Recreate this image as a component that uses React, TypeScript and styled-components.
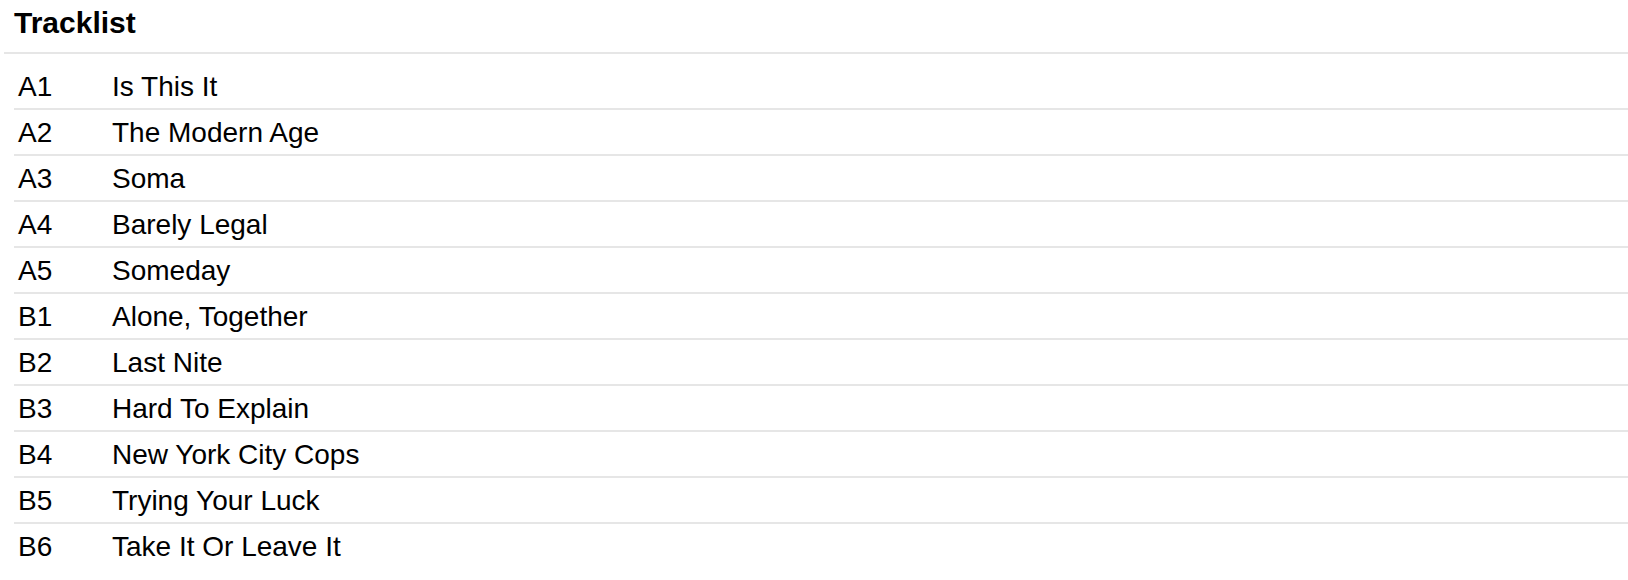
import React from 'react';
import styled, {createGlobalStyle} from "styled-components";

const tracks = [
    {position: "A1", title: "Is This It"},
    {position: "A2", title: "The Modern Age"},
    {position: "A3", title: "Soma"},
    {position: "A4", title: "Barely Legal"},
    {position: "A5", title: "Someday"},
    {position: "B1", title: "Alone, Together"},
    {position: "B2", title: "Last Nite"},
    {position: "B3", title: "Hard To Explain"},
    {position: "B4", title: "New York City Cops"},
    {position: "B5", title: "Trying Your Luck"},
    {position: "B6", title: "Take It Or Leave It"},
];

const App = () => {
    return (
        <>
            <GlobalStyle/>
            <StyledTracklist>
                <Header>
                    <Title>Tracklist</Title>
                </Header>
                <List>
                    {tracks.map(t => (
                        <Row key={t.position}>
                            <Position>{t.position}</Position>
                            <TrackTitle>{t.title}</TrackTitle>
                        </Row>
                    ))}
                </List>
            </StyledTracklist>
        </>
    );
};

export default App;

const GlobalStyle = createGlobalStyle`
  body {
    margin: 0;
    background: #fff;
    color: #000;
    font-family: "Liberation Sans", Arial, Helvetica, sans-serif;
  }
`

const StyledTracklist = styled.section`
  overflow: hidden;
`

const Header = styled.div`
  margin-left: 4px;
  padding: 7px 10px 13px;
  border-bottom: 2px solid #e6e6e6;
`

const Title = styled.h2`
  margin: 0;
  font-size: 30px;
  line-height: 32px;
  font-weight: 700;
`

const List = styled.ol`
  list-style: none;
  margin: 10px 0 0 14px;
  padding: 0;
`

const Row = styled.li`
  display: grid;
  grid-template-columns: 94px 1fr;
  padding: 7px 4px 5px;
  font-size: 28px;
  line-height: 32px;
  border-bottom: 2px solid #e6e6e6;

  &:last-child {
    border-bottom: none;
  }
`

const Position = styled.span``

const TrackTitle = styled.span``
